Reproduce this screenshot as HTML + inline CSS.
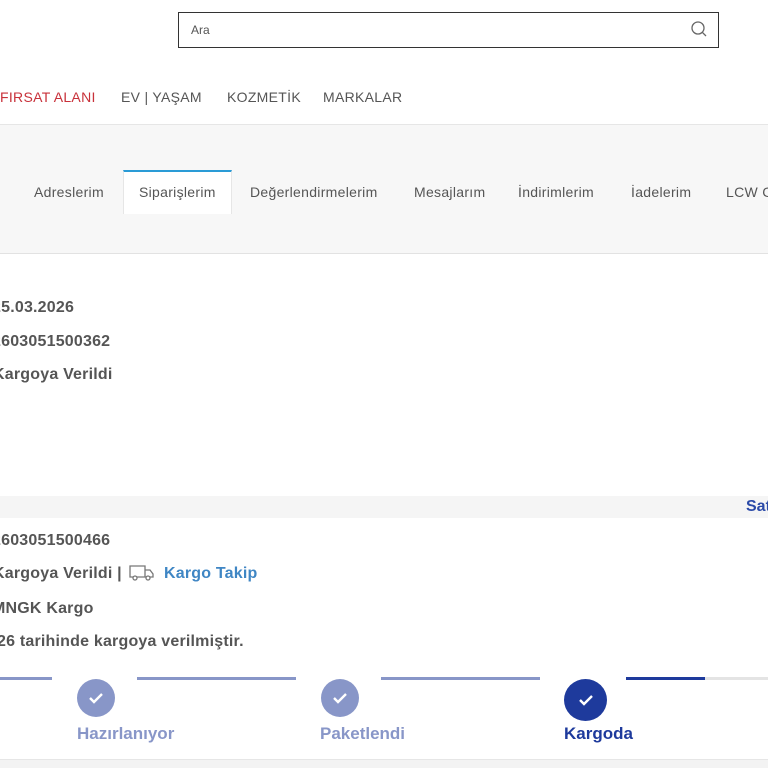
<!DOCTYPE html>
<html><head><meta charset="utf-8"><style>
*{margin:0;padding:0;box-sizing:border-box}
html,body{width:768px;height:768px;overflow:hidden}
body{background:#fff;font-family:"Liberation Sans",sans-serif;color:#555}
#w{position:relative;width:768px;height:768px;overflow:hidden}
.a{position:absolute;white-space:nowrap}
.nav{font-size:14px;color:#555;top:89px;letter-spacing:0.3px}
.tab{font-size:14px;color:#555;top:184px;letter-spacing:0.3px}
.b{font-size:16px;font-weight:bold;color:#555;letter-spacing:0.2px}
.line{position:absolute;height:3px;top:677px;background:#8896c8}
.c{position:absolute;border-radius:50%;background:#8896c8;display:flex;align-items:center;justify-content:center}
.lbl{position:absolute;top:724px;font-size:17px;font-weight:bold;color:#8896c8}
</style></head><body><div id="w">
<div class="a" style="left:178px;top:12px;width:541px;height:36px;border:1px solid #333;"></div>
<div class="a" style="left:191px;top:23px;font-size:12px;color:#555">Ara</div>
<svg class="a" style="left:690px;top:20px" width="18" height="18" viewBox="0 0 18 18"><circle cx="8" cy="8" r="6" fill="none" stroke="#666" stroke-width="1.3"/><line x1="12.3" y1="12.3" x2="16" y2="16" stroke="#666" stroke-width="1.3"/></svg>
<div class="a nav" style="left:0;color:#c8313a">FIRSAT ALANI</div>
<div class="a nav" style="left:121px">EV | YAŞAM</div>
<div class="a nav" style="left:227px">KOZMETİK</div>
<div class="a nav" style="left:323px">MARKALAR</div>
<div class="a" style="left:0;top:124px;width:768px;height:130px;background:#f7f7f7;border-top:1px solid #e6e6e6;border-bottom:1px solid #e2e2e2"></div>
<div class="a" style="left:123px;top:170px;width:109px;height:44px;background:#fff;border-top:2px solid #2a9bd6;border-left:1px solid #e6e6e6;border-right:1px solid #e6e6e6"></div>
<div class="a tab" style="left:34px">Adreslerim</div>
<div class="a tab" style="left:139px">Siparişlerim</div>
<div class="a tab" style="left:250px">Değerlendirmelerim</div>
<div class="a tab" style="left:414px">Mesajlarım</div>
<div class="a tab" style="left:518px">İndirimlerim</div>
<div class="a tab" style="left:631px">İadelerim</div>
<div class="a tab" style="left:726px">LCW C</div>
<div class="a b" style="left:-8px;top:299px">25.03.2026</div>
<div class="a b" style="left:-8px;top:333px">2603051500362</div>
<div class="a b" style="left:-7px;top:366px">Kargoya Verildi</div>
<div class="a" style="left:0;top:496px;width:768px;height:22px;background:#f5f5f5"></div>
<div class="a" style="left:746px;top:498px;font-size:16px;font-weight:bold;color:#2b4aa8">Sat</div>
<div class="a b" style="left:-8px;top:532px">2603051500466</div>
<div class="a b" style="left:-7px;top:565px">Kargoya Verildi |</div>
<svg class="a" style="left:129px;top:564px" width="26" height="17" viewBox="0 0 26 17"><path d="M1 2h15v11H1z M16 6h5l3 4v3h-8" fill="none" stroke="#777" stroke-width="1.3"/><circle cx="6" cy="14" r="2" fill="#fff" stroke="#777" stroke-width="1.3"/><circle cx="19" cy="14" r="2" fill="#fff" stroke="#777" stroke-width="1.3"/></svg>
<div class="a" style="left:164px;top:565px;font-size:16px;font-weight:bold;color:#3f86c4;letter-spacing:0.2px">Kargo Takip</div>
<div class="a b" style="left:-8px;top:600px">MNGK Kargo</div>
<div class="a b" style="left:-3px;top:633px">26 tarihinde kargoya verilmiştir.</div>
<div class="line" style="left:0;width:52px"></div>
<div class="line" style="left:137px;width:159px"></div>
<div class="line" style="left:381px;width:159px"></div>
<div class="line" style="left:626px;width:79px;background:#1e3a9c"></div>
<div class="line" style="left:705px;width:63px;background:#e4e4e4"></div>
<div class="c" style="left:77px;top:679px;width:38px;height:38px"><svg width="16" height="12" viewBox="0 0 16 12"><path d="M2 6l4 4 8-8" fill="none" stroke="#fff" stroke-width="2.4"/></svg></div>
<div class="c" style="left:321px;top:679px;width:38px;height:38px"><svg width="16" height="12" viewBox="0 0 16 12"><path d="M2 6l4 4 8-8" fill="none" stroke="#fff" stroke-width="2.4"/></svg></div>
<div class="c" style="left:564px;top:679px;width:43px;height:42px;background:#1e3a9c"><svg width="16" height="12" viewBox="0 0 16 12"><path d="M2 6l4 4 8-8" fill="none" stroke="#fff" stroke-width="2.4"/></svg></div>
<div class="lbl" style="left:77px">Hazırlanıyor</div>
<div class="lbl" style="left:320px">Paketlendi</div>
<div class="lbl" style="left:564px;color:#1e3a9c">Kargoda</div>
<div class="a" style="left:0;top:759px;width:768px;height:9px;background:#f3f3f3;border-top:1px solid #e6e6e6"></div>
</div></body></html>
